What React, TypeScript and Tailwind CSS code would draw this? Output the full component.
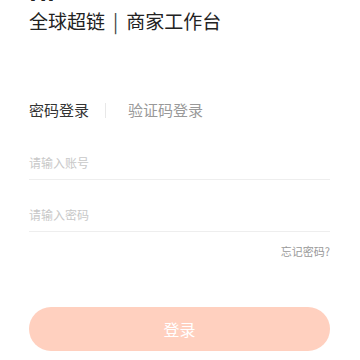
import React from "react";

export default function App() {
  const font = { fontFamily: '"Noto Sans CJK SC", "Noto Sans", sans-serif' };
  return (
    <div className="w-[360px] h-[360px] bg-white overflow-hidden" style={font}>
      <div className="pl-[29px] pr-[30px]">
        <div className="-mt-[22px] h-[26px] text-[24px] font-bold leading-[26px] text-[#222]">Hi</div>
        <div className="mt-[3px] h-[28px] text-[19px] leading-[28px] text-[#222] flex items-center">
          <span>全球超链</span>
          <span className="mx-[8px] text-[#444]">|</span>
          <span>商家工作台</span>
        </div>
        <div className="mt-[61px] flex items-center h-[28px]">
          <span className="text-[15px] text-[#333]">密码登录</span>
          <span className="mx-[16px] w-px h-[15px] bg-[#e8e8e8]"></span>
          <span className="ml-[6px] text-[15px] text-[#999]">验证码登录</span>
        </div>
        <div className="mt-[23px] h-[33px] flex items-center border-b border-[#eeeeee]">
          <span className="text-[12px] text-[#c8c8c8]">请输入账号</span>
        </div>
        <div className="mt-[19px] h-[33px] flex items-center border-b border-[#eeeeee]">
          <span className="text-[12px] text-[#c8c8c8]">请输入密码</span>
        </div>
        <div className="mt-[11px] flex justify-end h-[16px]">
          <span className="text-[11px] text-[#999] leading-[16px]">忘记密码?</span>
        </div>
        <div className="mt-[48px] h-[44px] rounded-full bg-[#ffd0bf] flex items-center justify-center">
          <span className="text-[16px] text-white">登录</span>
        </div>
      </div>
    </div>
  );
}
